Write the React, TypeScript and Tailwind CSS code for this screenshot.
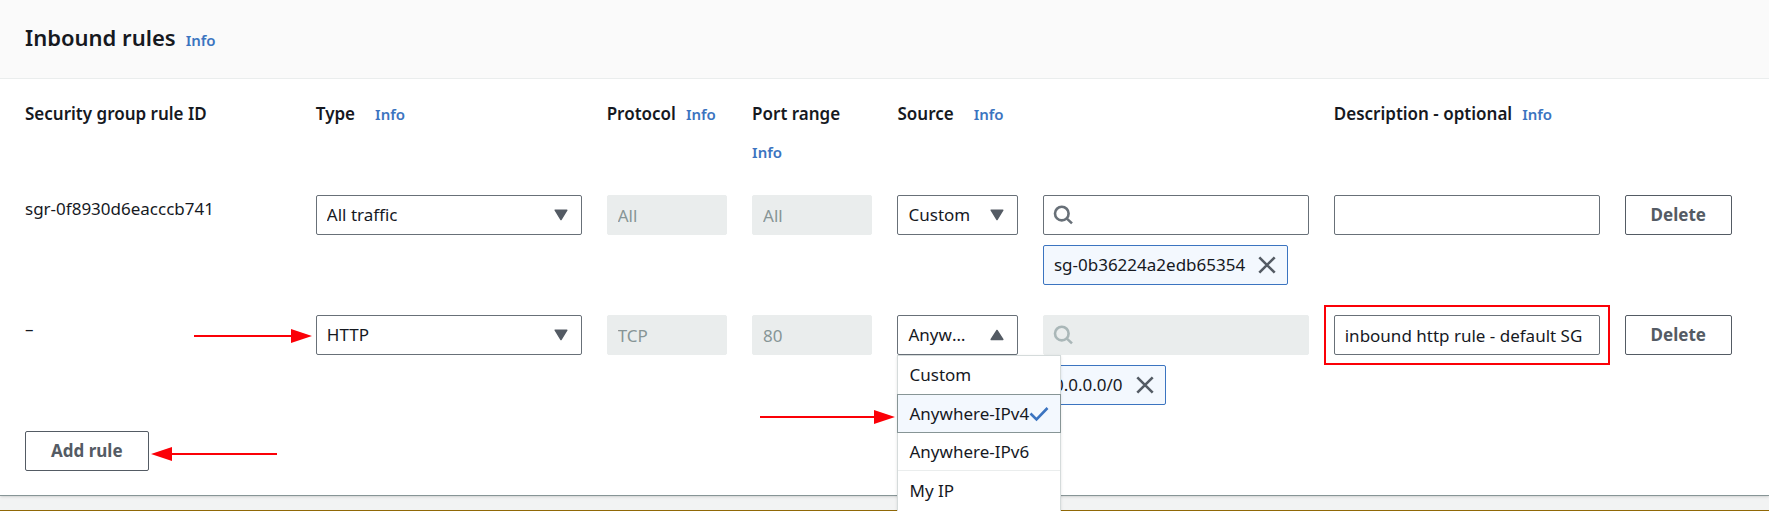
import type { ReactNode } from "react";

const control =
  "block h-10 w-full rounded-xs border border-[#687078] bg-white px-2.5 text-[17px] text-[#16191f] disabled:border-[#eaeded] disabled:bg-[#eaeded] disabled:text-[#879596] disabled:opacity-100";

function InfoLink() {
  return (
    <a href="#info" className="text-[15px] font-semibold text-[#3b74c0]">
      Info
    </a>
  );
}

function Heading({ id, label, span, gap, info = true }: { id: string; label: string; span: string; gap: string; info?: boolean }) {
  return (
    <div className={`flex flex-wrap items-baseline leading-[38px] ${gap} ${span}`}>
      <span id={id} className="whitespace-nowrap text-[17px] font-semibold">
        {label}
      </span>
      {info && <InfoLink />}
    </div>
  );
}

function Triangle({ up = false }: { up?: boolean }) {
  return (
    <svg
      viewBox="0 0 14 12"
      className="pointer-events-none absolute top-3.5 right-3.5 h-3 w-3.5 fill-[#545b64] stroke-[#545b64]"
      strokeWidth="1.5"
      strokeLinejoin="round"
      aria-hidden="true"
    >
      <path d={up ? "M1.2 10.5h11.6L7 1.5z" : "M1.2 1.2h11.6L7 10.5z"} />
    </svg>
  );
}

function Dropdown({ labelledBy, options, up, children }: { labelledBy: string; options: string[]; up?: boolean; children?: ReactNode }) {
  return (
    <div className="relative">
      <select aria-labelledby={labelledBy} className={`${control} appearance-none overflow-hidden text-ellipsis whitespace-nowrap pr-11`}>
        {options.map((o) => (
          <option key={o}>{o}</option>
        ))}
      </select>
      <Triangle up={up} />
      {children}
    </div>
  );
}

function SearchBox({ disabled = false }: { disabled?: boolean }) {
  return (
    <div className="relative">
      <input type="search" aria-labelledby="h-source" disabled={disabled} className={`${control} pl-10`} />
      <svg
        viewBox="0 0 20 20"
        className={`pointer-events-none absolute top-2.5 left-2.5 size-5 fill-none ${disabled ? "stroke-[#aab7b8]" : "stroke-[#687078]"}`}
        strokeWidth="2.6"
        aria-hidden="true"
      >
        <circle cx="8.8" cy="8.6" r="6.8" />
        <path d="M13.6 13.4l5.4 5" />
      </svg>
    </div>
  );
}

function Token({ text }: { text: string }) {
  return (
    <div className="mt-2.5 flex h-10 w-fit items-center gap-3 rounded-xs border border-[#3b74c0] bg-[#f3f8fe] px-2.5 text-[17px]">
      <span>{text}</span>
      <button type="button" aria-label={`Remove ${text}`}>
        <svg viewBox="0 0 20 20" className="size-5 stroke-[#545b64]" strokeWidth="2.6" aria-hidden="true">
          <path d="M2.3 2.3l15.4 15.4M17.7 2.3L2.3 17.7" />
        </svg>
      </button>
    </div>
  );
}

function Arrow({ length, left = false, place }: { length: number; left?: boolean; place: string }) {
  return (
    <svg width={length} height="14" viewBox={`0 0 ${length} 14`} className={`pointer-events-none absolute max-w-none fill-[#fb0007] ${place}`} aria-hidden="true">
      {left ? (
        <path d={`M0 7L21 0V6H${length}V8H21V14z`} />
      ) : (
        <path d={`M${length} 7L${length - 21} 0V6H0V8H${length - 21}V14z`} />
      )}
    </svg>
  );
}

function ActionButton({ children }: { children: ReactNode }) {
  return (
    <button type="button" className="h-10 rounded-xs border border-[#545b64] bg-white px-[25px] text-[17px] font-bold whitespace-nowrap text-[#545b64]">
      {children}
    </button>
  );
}

function SourceMenu() {
  const option = "block w-full px-[11px] text-left whitespace-nowrap";
  return (
    <div role="listbox" aria-labelledby="h-source" className="absolute top-full left-0 z-10 w-[164px] border border-[#d5dbdb] bg-white text-[17px] shadow-sm">
      <button type="button" role="option" aria-selected="false" className={`${option} h-[38px]`}>
        Custom
      </button>
      <div className="relative -mx-px">
        <button
          type="button"
          role="option"
          aria-selected="true"
          className="flex h-[39px] w-full items-center border border-[#879596] bg-[#f3f8fe] px-[11px] text-left whitespace-nowrap"
        >
          Anywhere-IPv4
          <svg viewBox="0 0 20 20" className="size-5 shrink-0 fill-none stroke-[#3b74c0]" strokeWidth="2.6" aria-hidden="true">
            <path d="M1.5 9.5l6 6L18.5 4" />
          </svg>
        </button>
        <Arrow length={135} place="right-full top-4 mr-0.5" />
      </div>
      <button type="button" role="option" aria-selected="false" className={`${option} h-[38px] border-b border-[#eaeded]`}>
        Anywhere-IPv6
      </button>
      <button type="button" role="option" aria-selected="false" className={`${option} h-10`}>
        My IP
      </button>
    </div>
  );
}

const row = "grid grid-cols-12 items-start gap-x-[25px]";

export default function App() {
  return (
    <div className="flex min-h-screen flex-col overflow-hidden bg-[#f2f3f3] font-['Noto_Sans',sans-serif] text-[#16191f]">
      <section className="border-b border-[#879596] bg-white shadow-sm">
        <header className="flex items-baseline gap-2.5 border-b border-[#eaeded] bg-[#fafafa] px-[25px] pt-[19px] pb-[23px]">
          <h2 className="text-[22px] leading-9 font-semibold">Inbound rules</h2>
          <InfoLink />
        </header>

        <div className="pt-4 pr-6 pb-6 pl-[25px]">
          <div className={row}>
            <Heading id="h-id" label="Security group rule ID" span="col-span-2" gap="" info={false} />
            <Heading id="h-type" label="Type" span="col-span-2" gap="gap-x-5" />
            <Heading id="h-protocol" label="Protocol" span="col-span-1" gap="gap-x-2.5" />
            <Heading id="h-port" label="Port range" span="col-span-1" gap="gap-x-5" />
            <Heading id="h-source" label="Source" span="col-span-3" gap="gap-x-5" />
            <Heading id="h-desc" label="Description - optional" span="col-span-2" gap="gap-x-2.5" />
          </div>

          <div className={`${row} mt-6`}>
            <div className="col-span-2 text-[17px] leading-7">sgr-0f8930d6eacccb741</div>
            <div className="col-span-2">
              <Dropdown labelledBy="h-type" options={["All traffic", "HTTP"]} />
            </div>
            <input aria-labelledby="h-protocol" disabled defaultValue="All" className={control} />
            <input aria-labelledby="h-port" disabled defaultValue="All" className={control} />
            <Dropdown labelledBy="h-source" options={["Custom", "Anywhere-IPv4"]} />
            <div className="col-span-2">
              <SearchBox />
              <Token text="sg-0b36224a2edb65354" />
            </div>
            <div className="col-span-2">
              <input aria-labelledby="h-desc" className={control} />
            </div>
            <div>
              <ActionButton>Delete</ActionButton>
            </div>
          </div>

          <div className={`${row} mt-[30px]`}>
            <div className="col-span-2 text-[17px] leading-7">–</div>
            <div className="col-span-2">
              <Dropdown labelledBy="h-type" options={["HTTP", "All traffic"]}>
                <Arrow length={118} place="right-full top-3.5 mr-1" />
              </Dropdown>
            </div>
            <input aria-labelledby="h-protocol" disabled defaultValue="TCP" className={control} />
            <input aria-labelledby="h-port" disabled defaultValue="80" className={control} />
            <Dropdown labelledBy="h-source" options={["Anywhere-IPv4", "Custom"]} up>
              <SourceMenu />
            </Dropdown>
            <div className="col-span-2">
              <SearchBox disabled />
              <Token text="0.0.0.0/0" />
            </div>
            <div className="relative col-span-2">
              <input aria-labelledby="h-desc" defaultValue="inbound http rule - default SG" className={control} />
              <div className="pointer-events-none absolute -inset-2.5 border-2 border-[#fb0007]" />
            </div>
            <div>
              <ActionButton>Delete</ActionButton>
            </div>
          </div>

          <div className="relative mt-[26px] w-fit">
            <ActionButton>Add rule</ActionButton>
            <Arrow length={126} left place="left-full top-4 ml-0.5" />
          </div>
        </div>
      </section>
      <div className="mt-auto border-b border-[#906806]" />
    </div>
  );
}
